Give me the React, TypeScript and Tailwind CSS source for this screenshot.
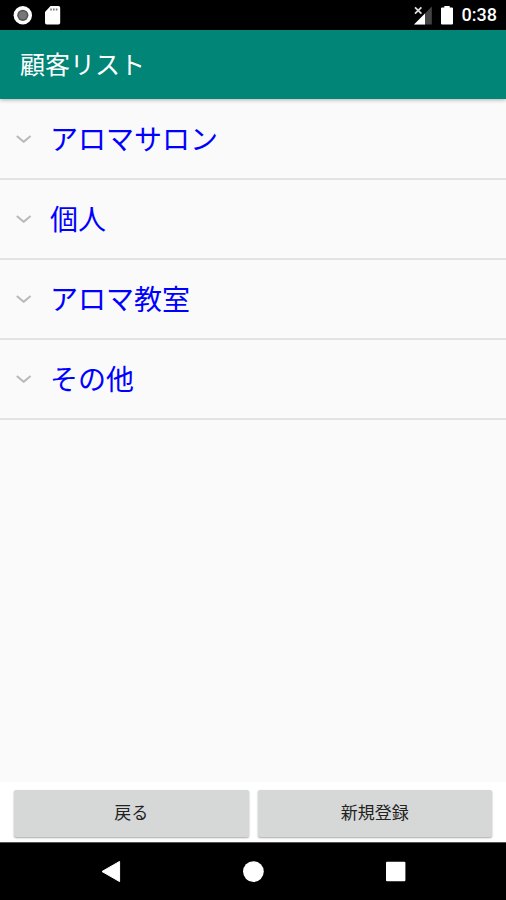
import { useState } from "react";

type CustomerGroup = {
  id: string;
  name: string;
};

const groups: CustomerGroup[] = [
  { id: "salon", name: "アロマサロン" },
  { id: "personal", name: "個人" },
  { id: "school", name: "アロマ教室" },
  { id: "other", name: "その他" },
];

function StatusBar() {
  return (
    <div className="flex h-[30px] shrink-0 items-center justify-between bg-black pr-[9px] pl-3 text-white">
      <div className="flex items-center gap-3">
        <svg className="size-5" viewBox="0 0 20 20" aria-hidden="true">
          <circle cx="10.8" cy="10.3" r="9.2" fill="#fff" />
          <circle cx="10.8" cy="10.3" r="5.6" fill="#555" />
          <circle cx="10.8" cy="10.3" r="4" fill="#777" />
        </svg>
        <svg className="h-5 w-[17px]" viewBox="0 0 17 20" aria-hidden="true">
          <path
            d="M6.5 1H14.5Q16.2 1 16.2 2.7V17.8Q16.2 19.5 14.5 19.5H2.7Q1 19.5 1 17.8V7Z"
            fill="#fff"
          />
          <path d="M6.2 3.4h1.6v2.2H6.2zM9 3.4h1.6v2.2H9zM11.8 3.4h1.6v2.2h-1.6z" fill="#777" />
        </svg>
      </div>

      <div className="flex items-center gap-[9px]">
        <svg className="h-5 w-[18px]" viewBox="0 0 18 20" aria-hidden="true">
          <path d="M17.8 1.5V19.5H0Z" fill="#444" />
          <path d="M11 8.4V19.5H0Z" fill="#fff" />
          <path d="M0 1H8.6V9.6H0Z" fill="#000" />
          <path d="M1 2.4 7.4 8.6M7.4 2.4 1 8.6" stroke="#ddd" strokeWidth="1.8" />
        </svg>
        <svg className="h-5 w-3" viewBox="0 0 12 20" aria-hidden="true">
          <path
            d="M3.3 1H8.7V2.6H11Q12 2.6 12 3.6V18.5Q12 19.5 11 19.5H1Q0 19.5 0 18.5V3.6Q0 2.6 1 2.6H3.3Z"
            fill="#fff"
          />
        </svg>
        <span className="font-['Roboto',sans-serif] text-lg leading-5 font-medium">0:38</span>
      </div>
    </div>
  );
}

function GroupRow({ group }: { group: CustomerGroup }) {
  const [isOpen, setIsOpen] = useState(false);

  return (
    <li className="border-b-2 border-[#e3e3e3]">
      <button
        type="button"
        aria-expanded={isOpen}
        onClick={() => setIsOpen(!isOpen)}
        className="flex h-[78px] w-full items-center gap-[18px] px-4 text-left"
      >
        <svg
          className={isOpen ? "h-2 w-4 shrink-0 rotate-180" : "h-2 w-4 shrink-0"}
          viewBox="0 0 16 8"
          fill="none"
          aria-hidden="true"
        >
          <path d="M.8 1 7.7 6.8 14.6 1" stroke="#b9b9b9" strokeWidth="2" />
        </svg>
        <span className="pb-0.5 text-[28px] leading-10 text-[#0000ff]">{group.name}</span>
      </button>
    </li>
  );
}

function ActionButton({ label }: { label: string }) {
  return (
    <button
      type="button"
      className="h-[47px] flex-1 rounded-xs bg-[#d6d8d7] pb-1 text-[17px] leading-6 text-[#222222] shadow-[0_1px_2px_rgba(0,0,0,0.35)] active:bg-[#c4c6c5]"
    >
      {label}
    </button>
  );
}

function NavigationBar() {
  return (
    <nav className="grid h-[58px] shrink-0 grid-cols-3 border-t border-[#555555] bg-black px-10">
      <button type="button" aria-label="Back" className="flex items-center justify-center">
        <svg className="size-[22px]" viewBox="0 0 22 22" aria-hidden="true">
          <path d="M2 10.5 19.6.4V20.6Z" fill="#fff" stroke="#fff" strokeLinejoin="round" />
        </svg>
      </button>
      <button type="button" aria-label="Home" className="flex items-center justify-center">
        <svg className="size-[22px]" viewBox="0 0 22 22" aria-hidden="true">
          <circle cx="11.4" cy="10.6" r="10.4" fill="#fff" />
        </svg>
      </button>
      <button type="button" aria-label="Recents" className="flex items-center justify-center">
        <svg className="size-[22px]" viewBox="0 0 22 22" aria-hidden="true">
          <rect x="2" y="0.8" width="19.4" height="19.4" rx="1" fill="#fff" />
        </svg>
      </button>
    </nav>
  );
}

export default function App() {
  return (
    <div
      lang="ja"
      className="flex min-h-screen flex-col bg-[#fafafa] font-['Noto_Sans_CJK_JP',sans-serif]"
    >
      <StatusBar />

      <header className="z-10 flex h-[69px] shrink-0 items-center bg-[#008577] px-5 pb-1 shadow-[0_1px_4px_rgba(0,0,0,0.3)]">
        <h1 className="text-[25px] leading-9 font-normal text-white">顧客リスト</h1>
      </header>

      <main className="flex-1 pt-px">
        <ul>
          {groups.map((group) => (
            <GroupRow key={group.id} group={group} />
          ))}
        </ul>
      </main>

      <footer className="flex shrink-0 gap-[9px] bg-white px-3.5 pt-2 pb-[5px]">
        <ActionButton label="戻る" />
        <ActionButton label="新規登録" />
      </footer>

      <NavigationBar />
    </div>
  );
}
